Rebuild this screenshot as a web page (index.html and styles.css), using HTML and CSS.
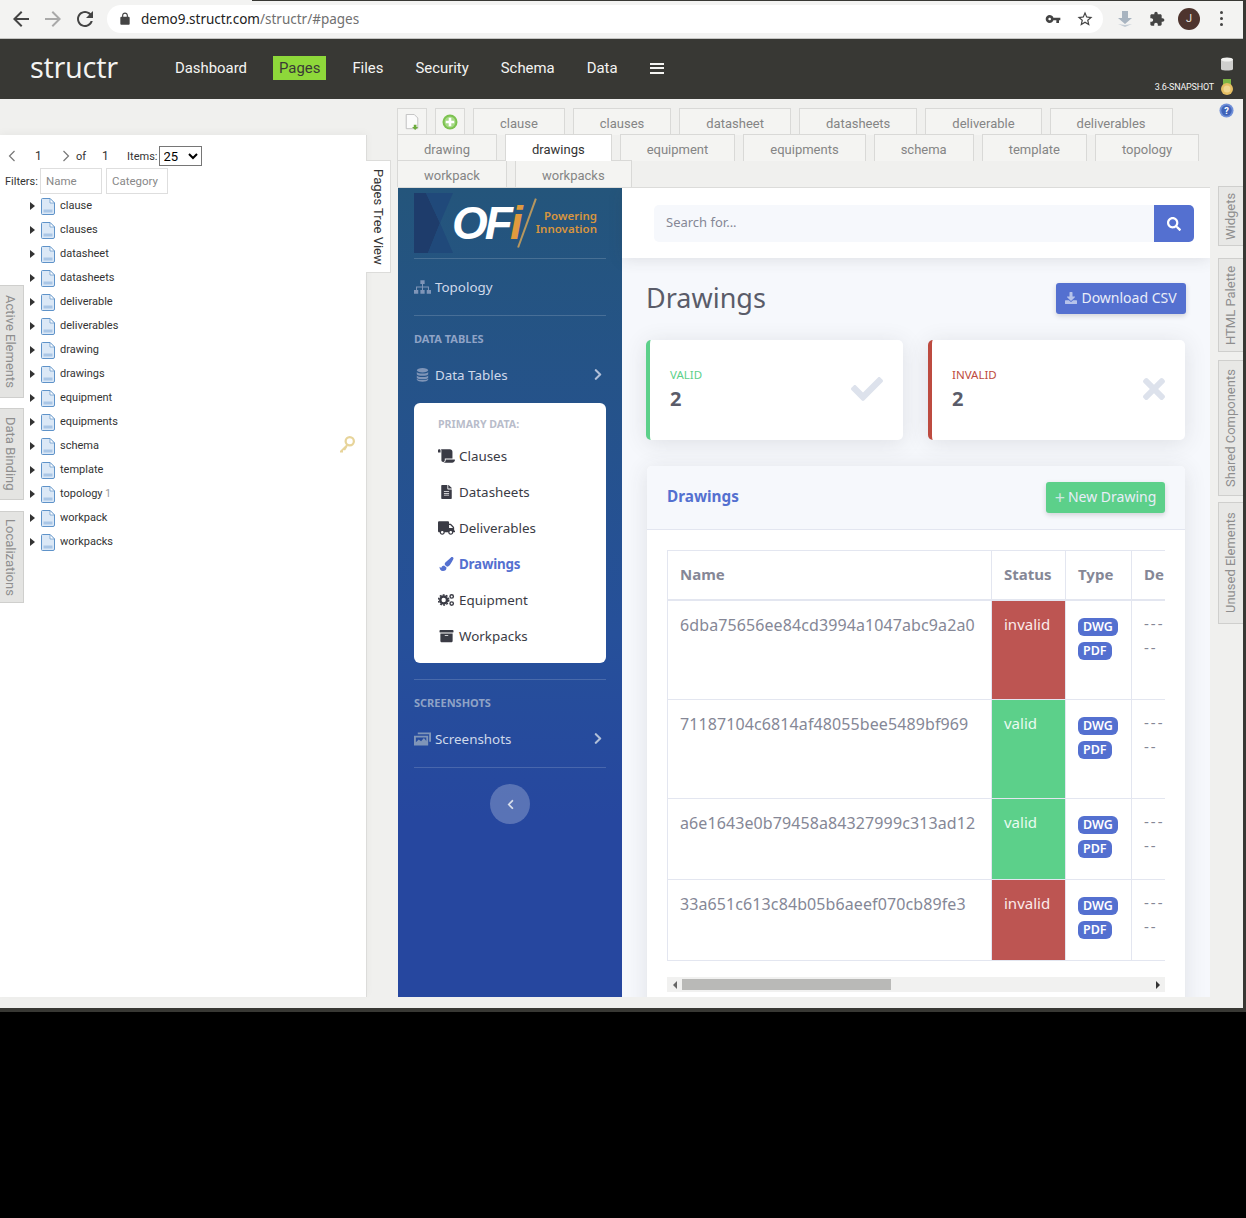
FILE: index.html
```html
<!DOCTYPE html>
<html lang="en">
<head>
    <meta charset="UTF-8">
    <title>Structr - Pages</title>
    <link rel="stylesheet" href="styles.css">
</head>
<body>
<svg class="defs" width="0" height="0">
    <symbol id="i-page" viewBox="0 0 14 17">
        <path d="M1.5.5h7.5l4.5 4.5v10a1.5 1.5 0 0 1-1.5 1.5H1.5A1 1 0 0 1 .5 15.500V1.500a1 1 0 0 1 1-1z" fill="#dbe8f6" stroke="#5f93c9"/>
        <path d="M9 .5V5h4.500z" fill="#fff" stroke="#5f93c9" stroke-width=".7"/>
        <path d="M2.500 11.500h9v3h-9z" fill="#a9c6e6"/>
    </symbol>
    <symbol id="i-chev" viewBox="0 0 320 512"><path d="M285.476 272.971L91.132 467.314c-9.373 9.373-24.569 9.373-33.941 0l-22.667-22.667c-9.357-9.357-9.375-24.522-.04-33.901L188.505 256 34.484 101.255c-9.335-9.379-9.317-24.544.04-33.901l22.667-22.667c9.373-9.373 24.569-9.373 33.941 0L285.475 239.03c9.373 9.372 9.373 24.568.001 33.941z"/></symbol>
    <symbol id="i-download" viewBox="0 0 512 512"><path d="M216 0h80c13.300 0 24 10.700 24 24v168h87.700c17.800 0 26.700 21.500 14.100 34.100L269.700 378.300c-7.500 7.500-19.800 7.500-27.300 0L90.100 226.100c-12.600-12.600-3.700-34.100 14.100-34.100H192V24c0-13.300 10.700-24 24-24zM512 376v112c0 13.300-10.700 24-24 24H24c-13.300 0-24-10.700-24-24V376c0-13.300 10.700-24 24-24h146.700l49 49c20.100 20.100 52.500 20.100 72.600 0l49-49H488c13.300 0 24 10.700 24 24z"/></symbol>
</svg>

<div class="app">
    <div class="browser">
        <svg class="b-icon" viewBox="0 0 24 24" fill="#444"><path d="M20 11H7.830l5.590-5.590L12 4l-8 8 8 8 1.410-1.410L7.830 13H20v-2z"/></svg>
        <svg class="b-icon" viewBox="0 0 24 24" fill="#a9a9a9"><path d="M4 11h12.170l-5.590-5.590L12 4l8 8-8 8-1.410-1.410L16.170 13H4v-2z"/></svg>
        <svg class="b-icon" viewBox="0 0 24 24" fill="#444"><path d="M17.650 6.350C16.200 4.900 14.210 4 12 4c-4.420 0-7.990 3.580-7.990 8s3.570 8 7.990 8c3.730 0 6.840-2.550 7.730-6h-2.080c-.82 2.330-3.040 4-5.650 4-3.310 0-6-2.690-6-6s2.690-6 6-6c1.660 0 3.140.69 4.220 1.780L13 11h7V4l-2.350 2.350z"/></svg>
        <div class="url">
            <svg class="lock" viewBox="0 0 24 24" fill="#444"><path d="M18 8h-1V6c0-2.760-2.240-5-5-5S7 3.240 7 6v2H6c-1.100 0-2 .9-2 2v10c0 1.100.9 2 2 2h12c1.100 0 2-.9 2-2V10c0-1.100-.9-2-2-2zM9 6c0-1.660 1.340-3 3-3s3 1.340 3 3v2H9V6z"/></svg>
            <span class="url-text">demo9.structr.com<span class="url-path">/structr/#pages</span></span>
            <svg class="url-key" viewBox="0 0 24 24" fill="#444"><path d="M12.650 10C11.830 7.670 9.610 6 7 6c-3.310 0-6 2.690-6 6s2.690 6 6 6c2.610 0 4.830-1.670 5.650-4H17v4h4v-4h2v-4H12.650zM7 14c-1.100 0-2-.9-2-2s.9-2 2-2 2 .9 2 2-.9 2-2 2z"/></svg>
            <svg class="url-star" viewBox="0 0 24 24" fill="#444"><path d="M22 9.240l-7.190-.62L12 2 9.190 8.630 2 9.240l5.460 4.730L5.820 21 12 17.270 18.180 21l-1.630-7.030L22 9.240zM12 15.400l-3.760 2.270 1-4.280-3.320-2.880 4.380-.38L12 6.100l1.710 4.040 4.380.38-3.320 2.880 1 4.280L12 15.400z"/></svg>
        </div>
        <div class="b-right">
            <svg class="b-small" viewBox="0 0 16 16"><path d="M5 0h6v7h4l-7 6-7-6h4z" fill="#a8b4c0"/><path d="M1 13l7 3 7-3-7 1z" fill="#c3ccd4"/></svg>
            <svg class="b-small" viewBox="0 0 24 24" fill="#444"><path d="M20.500 11H19V7c0-1.100-.9-2-2-2h-4V3.500C13 2.120 11.880 1 10.500 1S8 2.120 8 3.500V5H4c-1.100 0-1.990.9-1.990 2v3.800H3.500c1.490 0 2.700 1.210 2.700 2.700s-1.210 2.700-2.700 2.700H2V20c0 1.100.9 2 2 2h3.800v-1.500c0-1.490 1.210-2.700 2.700-2.700 1.490 0 2.700 1.210 2.700 2.700V22H17c1.100 0 2-.9 2-2v-4h1.500c1.380 0 2.500-1.120 2.500-2.500S21.880 11 20.500 11z"/></svg>
            <span class="avatar">J</span>
            <span class="dots"><i></i><i></i><i></i></span>
        </div>
    </div>

    <header class="topnav">
        <div class="logo">structr</div>
        <nav class="menu">
            <a>Dashboard</a>
            <a class="on">Pages</a>
            <a>Files</a>
            <a>Security</a>
            <a>Schema</a>
            <a>Data</a>
            <span class="burger"><i></i><i></i><i></i></span>
        </nav>
        <div class="version">
            <svg class="db" viewBox="0 0 12 14"><path d="M0 2.500C0 1 12 1 12 2.500v9.500C12 14 0 14 0 12z" fill="#cfcfcd"/><ellipse cx="6" cy="2.500" rx="6" ry="2" fill="#f1f1ef"/></svg>
            <div class="ver-row">
                <span>3.6-SNAPSHOT</span>
                <svg class="medal" viewBox="0 0 12 16"><path d="M2 0h8v6H2z" fill="#7db544"/><circle cx="6" cy="10" r="6" fill="#e5be63"/><circle cx="6" cy="10" r="3.500" fill="#f0d68f"/></svg>
            </div>
        </div>
    </header>

    <div class="workspace">
        <div class="tree-col">
            <div class="tree-panel">
                <div class="pager">
                    <svg class="pg-arrow first" viewBox="0 0 8 12"><path d="M6.500 1L1.500 6l5 5" fill="none" stroke="#777" stroke-width="1.200"/></svg>
                    <span class="pg-num">1</span>
                    <svg class="pg-arrow" viewBox="0 0 8 12"><path d="M1.500 1l5 5-5 5" fill="none" stroke="#777" stroke-width="1.200"/></svg>
                    <span class="pg-of">of</span>
                    <span class="pg-total">1</span>
                    <span class="pg-items">Items:</span>
                    <select class="pg-select"><option>25</option></select>
                </div>
                <div class="filters">
                    <span>Filters:</span>
                    <input type="text" placeholder="Name">
                    <input type="text" placeholder="Category">
                </div>
                <ul class="tree">
                    <li><svg><use href="#i-page"/></svg>clause</li>
                    <li><svg><use href="#i-page"/></svg>clauses</li>
                    <li><svg><use href="#i-page"/></svg>datasheet</li>
                    <li><svg><use href="#i-page"/></svg>datasheets</li>
                    <li><svg><use href="#i-page"/></svg>deliverable</li>
                    <li><svg><use href="#i-page"/></svg>deliverables</li>
                    <li><svg><use href="#i-page"/></svg>drawing</li>
                    <li><svg><use href="#i-page"/></svg>drawings</li>
                    <li><svg><use href="#i-page"/></svg>equipment</li>
                    <li><svg><use href="#i-page"/></svg>equipments</li>
                    <li><svg><use href="#i-page"/></svg>schema</li>
                    <li><svg><use href="#i-page"/></svg>template</li>
                    <li><svg><use href="#i-page"/></svg>topology&nbsp;<b>1</b></li>
                    <li><svg><use href="#i-page"/></svg>workpack</li>
                    <li><svg><use href="#i-page"/></svg>workpacks</li>
                </ul>
                <svg class="key-hint" viewBox="0 0 24 24"><circle cx="17" cy="7" r="5.500" fill="none" stroke="#e7d49a" stroke-width="3"/><path d="M13 11L4 20v2h4v-3h3l3-5" fill="#e7d49a"/></svg>
            </div>
            <div class="left-tabs">
                <div class="left-tab t-active">Active Elements</div>
                <div class="left-tab t-binding">Data Binding</div>
                <div class="left-tab t-local">Localizations</div>
            </div>
            <div class="tree-tab">Pages Tree View</div>
        </div>

        <div class="center">
            <div class="tabs">
                <div class="tab tab-icon">
                    <svg viewBox="0 0 16 18"><path d="M1.500.5h9l4 4v12h-13z" fill="#fbfbfb" stroke="#bbb"/><path d="M10 12h3v2.500h2L11.500 18 8 14.500h2z" fill="#6cab3c"/></svg>
                </div>
                <div class="tab tab-icon">
                    <svg viewBox="0 0 16 16"><circle cx="8" cy="8" r="7.500" fill="#7cc24f"/><circle cx="8" cy="8" r="5.500" fill="#a6d986"/><path d="M6.700 3.800h2.600v2.900h2.900v2.600H9.300v2.900H6.700V9.300H3.800V6.700h2.900z" fill="#fff"/></svg>
                </div>
                <div class="tab">clause</div>
                <div class="tab">clauses</div>
                <div class="tab">datasheet</div>
                <div class="tab">datasheets</div>
                <div class="tab">deliverable</div>
                <div class="tab">deliverables</div>
                <div class="tab">drawing</div>
                <div class="tab active">drawings</div>
                <div class="tab">equipment</div>
                <div class="tab">equipments</div>
                <div class="tab">schema</div>
                <div class="tab">template</div>
                <div class="tab">topology</div>
                <div class="tab">workpack</div>
                <div class="tab">workpacks</div>
            </div>
            <svg class="help" viewBox="0 0 16 16"><circle cx="8" cy="8" r="7.500" fill="#6f8fd8"/><circle cx="8" cy="8" r="5.500" fill="#3f63b8"/><text x="8" y="11.500" text-anchor="middle" class="help-q">?</text></svg>

            <div class="frame">
                <aside class="sidebar">
                    <div class="brand">
                        <svg class="brand-bg" viewBox="0 0 40 60"><path d="M0 0h12l14 30-12 30H0z" fill="#1e3c6b"/><path d="M12 0h27L26 30l13 30H14l12-30z" fill="#20497a"/></svg>
                        <span class="brand-mark">OF<em>i</em></span>
                        <span class="brand-slash"></span>
                        <span class="brand-tag">Powering<br>Innovation</span>
                    </div>
                    <div class="side-line"></div>
                    <a class="side-link topo">
                        <svg class="side-icon" viewBox="0 0 20 16" fill="currentColor"><path d="M7.500 0h5v4.500h-5zM0 11.500h5V16H0zM7.500 11.500h5V16h-5zM15 11.500h5V16h-5zM9.400 4.500h1.200v2.900h7v4.100h-1.200V8.600h-5.800v2.900H9.400V8.600H3.600v2.900H2.400V7.400h7z"/></svg>
                        Topology
                    </a>
                    <div class="side-line"></div>
                    <div class="side-head">DATA TABLES</div>
                    <a class="side-link">
                        <svg class="side-icon" viewBox="0 0 16 16" fill="currentColor"><ellipse cx="8" cy="2.500" rx="6.500" ry="2.500"/><path d="M1.500 4.500c1 2.400 12 2.400 13 0V7c-1 2.400-12 2.400-13 0zM1.500 8.500c1 2.400 12 2.400 13 0V11c-1 2.400-12 2.400-13 0z"/><path d="M1.500 12c1 2.400 12 2.400 13 0v1.500c-1 3-12 3-13 0z"/></svg>
                        Data Tables
                        <svg class="side-chev"><use href="#i-chev"/></svg>
                    </a>
                    <div class="side-card">
                        <div class="card-head">PRIMARY DATA:</div>
                        <a class="card-link">
                            <svg viewBox="0 0 640 512" fill="currentColor"><path d="M48 0C21.530 0 0 21.530 0 48v64c0 8.840 7.160 16 16 16h80V48C96 21.530 74.470 0 48 0zm208 412.570V352h288V96c0-52.940-43.060-96-96-96H111.590C121.740 13.410 128 29.920 128 48v368c0 38.870 34.660 69.650 74.770 63.120C234.270 474 256 444.460 256 412.570zM288 384v32c0 52.930-43.060 96-96 96h336c61.860 0 112-50.140 112-112 0-8.840-7.160-16-16-16H288z"/></svg>
                            Clauses
                        </a>
                        <a class="card-link">
                            <svg viewBox="0 0 384 512" fill="currentColor"><path d="M224 136V0H24C10.700 0 0 10.700 0 24v464c0 13.300 10.700 24 24 24h336c13.300 0 24-10.700 24-24V160H248c-13.200 0-24-10.800-24-24zm64 236c0 6.600-5.400 12-12 12H108c-6.600 0-12-5.400-12-12v-8c0-6.600 5.400-12 12-12h168c6.600 0 12 5.400 12 12v8zm0-64c0 6.600-5.400 12-12 12H108c-6.600 0-12-5.400-12-12v-8c0-6.600 5.400-12 12-12h168c6.600 0 12 5.400 12 12v8zm0-72v8c0 6.600-5.400 12-12 12H108c-6.600 0-12-5.400-12-12v-8c0-6.600 5.400-12 12-12h168c6.600 0 12 5.400 12 12zm96-114.100v6.100H256V0h6.100c6.400 0 12.500 2.500 17 7l97.900 98c4.500 4.500 7 10.600 7 16.900z"/></svg>
                            Datasheets
                        </a>
                        <a class="card-link">
                            <svg viewBox="0 0 640 512" fill="currentColor"><path d="M624 352h-16V243.900c0-12.700-5.100-24.900-14.100-33.900L494 110.100c-9-9-21.200-14.100-33.900-14.100H416V48c0-26.500-21.500-48-48-48H48C21.500 0 0 21.500 0 48v320c0 26.500 21.500 48 48 48h16c0 53 43 96 96 96s96-43 96-96h128c0 53 43 96 96 96s96-43 96-96h48c8.800 0 16-7.200 16-16v-32c0-8.800-7.200-16-16-16zM160 464c-26.500 0-48-21.500-48-48s21.500-48 48-48 48 21.500 48 48-21.500 48-48 48zm320 0c-26.500 0-48-21.500-48-48s21.500-48 48-48 48 21.500 48 48-21.500 48-48 48zm80-208H416V144h44.100l99.900 99.900V256z"/></svg>
                            Deliverables
                        </a>
                        <a class="card-link current">
                            <svg viewBox="0 0 512 512" fill="currentColor"><path d="M167.020 309.340c-40.120 2.580-76.530 17.860-97.190 72.300-2.350 6.210-8 9.980-14.590 9.980-11.110 0-45.460-27.670-55.250-34.350C0 439.620 37.930 512 128 512c75.860 0 128-43.770 128-120.190 0-3.110-.65-6.080-.97-9.130l-88.010-73.340zM457.890 0c-15.160 0-29.370 6.710-40.210 16.450C213.270 199.050 192 203.340 192 257.090c0 13.700 3.250 26.760 8.730 38.700l63.820 53.180c7.210 1.800 14.640 3.030 22.390 3.030 62.110 0 98.110-45.470 211.160-256.460 7.380-14.350 13.900-29.850 13.900-45.990C512 20.640 486 0 457.890 0z"/></svg>
                            Drawings
                        </a>
                        <a class="card-link">
                            <svg viewBox="0 0 18 14"><circle cx="6" cy="7" r="3.600" fill="none" stroke="currentColor" stroke-width="2.600"/><circle cx="6" cy="7" r="5.400" fill="none" stroke="currentColor" stroke-width="1.600" stroke-dasharray="2 1.400"/><circle cx="14.500" cy="3.200" r="1.800" fill="none" stroke="currentColor" stroke-width="1.500"/><circle cx="14.500" cy="10.800" r="1.800" fill="none" stroke="currentColor" stroke-width="1.500"/></svg>
                            Equipment
                        </a>
                        <a class="card-link">
                            <svg viewBox="0 0 512 512" fill="currentColor"><path d="M32 448c0 17.700 14.300 32 32 32h384c17.700 0 32-14.300 32-32V160H32v288zm160-212c0-6.600 5.400-12 12-12h104c6.600 0 12 5.400 12 12v8c0 6.600-5.400 12-12 12H204c-6.600 0-12-5.400-12-12v-8zM480 32H32C14.300 32 0 46.300 0 64v48c0 8.800 7.200 16 16 16h480c8.800 0 16-7.200 16-16V64c0-17.700-14.300-32-32-32z"/></svg>
                            Workpacks
                        </a>
                    </div>
                    <div class="side-line"></div>
                    <div class="side-head">SCREENSHOTS</div>
                    <a class="side-link">
                        <svg class="side-icon" viewBox="0 0 18 14" fill="currentColor"><path d="M4 0h14v10h-2V2H4z"/><path d="M0 3.500h15V14H0zM2 5.500v5l3-3 2.500 2 3-3.500 2.500 3V5.500z" fill-rule="evenodd"/></svg>
                        Screenshots
                        <svg class="side-chev"><use href="#i-chev"/></svg>
                    </a>
                    <div class="side-line"></div>
                    <div class="side-toggle">
                        <svg viewBox="0 0 320 512"><use href="#i-chev"/></svg>
                    </div>
                </aside>

                <main class="main">
                    <div class="topbar">
                        <div class="search">
                            <span class="search-input">Search for...</span>
                            <span class="search-btn">
                                <svg viewBox="0 0 512 512" fill="#fff"><path d="M505 442.700L405.300 343c-4.500-4.500-10.600-7-17-7H372c27.600-35.300 44-79.700 44-128C416 93.100 322.900 0 208 0S0 93.100 0 208s93.100 208 208 208c48.300 0 92.700-16.400 128-44v16.300c0 6.400 2.500 12.500 7 17l99.700 99.700c9.400 9.400 24.600 9.400 33.900 0l28.300-28.300c9.400-9.400 9.400-24.600.1-34zM208 336c-70.700 0-128-57.200-128-128 0-70.700 57.200-128 128-128 70.700 0 128 57.200 128 128 0 70.700-57.200 128-128 128z"/></svg>
                            </span>
                        </div>
                    </div>
                    <div class="content">
                        <div class="title-row">
                            <h1>Drawings</h1>
                            <a class="btn btn-blue"><svg><use href="#i-download"/></svg>Download CSV</a>
                        </div>
                        <div class="stats">
                            <div class="stat stat-valid">
                                <div>
                                    <div class="stat-label">VALID</div>
                                    <div class="stat-num">2</div>
                                </div>
                                <svg class="stat-icon" viewBox="0 0 512 512"><path d="M173.898 439.404l-166.400-166.400c-9.997-9.997-9.997-26.206 0-36.204l36.203-36.204c9.997-9.998 26.207-9.998 36.204 0L192 312.690 432.095 72.596c9.997-9.997 26.207-9.997 36.204 0l36.203 36.204c9.997 9.997 9.997 26.206 0 36.204l-294.400 294.401c-9.998 9.997-26.207 9.997-36.204-.001z"/></svg>
                            </div>
                            <div class="stat stat-invalid">
                                <div>
                                    <div class="stat-label">INVALID</div>
                                    <div class="stat-num">2</div>
                                </div>
                                <svg class="stat-icon stat-x" viewBox="0 0 352 512"><path d="M242.720 256l100.070-100.070c12.280-12.280 12.280-32.190 0-44.480l-22.240-22.240c-12.280-12.280-32.190-12.280-44.480 0L176 189.280 75.930 89.210c-12.280-12.280-32.190-12.280-44.480 0L9.210 111.450c-12.280 12.280-12.280 32.190 0 44.480L109.280 256 9.210 356.070c-12.280 12.280-12.280 32.190 0 44.480l22.240 22.240c12.280 12.280 32.200 12.280 44.480 0L176 322.720l100.070 100.070c12.280 12.280 32.200 12.280 44.480 0l22.240-22.240c12.280-12.280 12.280-32.190 0-44.480L242.720 256z"/></svg>
                            </div>
                        </div>
                        <section class="card">
                            <div class="card-top">
                                <h2>Drawings</h2>
                                <a class="btn btn-green"><span class="plus">+</span>New Drawing</a>
                            </div>
                            <div class="card-body">
                                <div class="table-wrap">
                                    <table>
                                        <thead>
                                            <tr><th class="c-name">Name</th><th class="c-status">Status</th><th class="c-type">Type</th><th class="c-desc">De</th></tr>
                                        </thead>
                                        <tbody>
                                            <tr class="tall">
                                                <td class="hash">6dba75656ee84cd3994a1047abc9a2a0</td>
                                                <td class="bad">invalid</td>
                                                <td><span class="tag">DWG</span><span class="tag">PDF</span></td>
                                                <td class="dash">---<br>--</td>
                                            </tr>
                                            <tr class="tall">
                                                <td class="hash">71187104c6814af48055bee5489bf969</td>
                                                <td class="good">valid</td>
                                                <td><span class="tag">DWG</span><span class="tag">PDF</span></td>
                                                <td class="dash">---<br>--</td>
                                            </tr>
                                            <tr class="short">
                                                <td class="hash">a6e1643e0b79458a84327999c313ad12</td>
                                                <td class="good">valid</td>
                                                <td><span class="tag">DWG</span><span class="tag">PDF</span></td>
                                                <td class="dash">---<br>--</td>
                                            </tr>
                                            <tr class="short">
                                                <td class="hash">33a651c613c84b05b6aeef070cb89fe3</td>
                                                <td class="bad">invalid</td>
                                                <td><span class="tag">DWG</span><span class="tag">PDF</span></td>
                                                <td class="dash">---<br>--</td>
                                            </tr>
                                        </tbody>
                                    </table>
                                </div>
                                <div class="hscroll">
                                    <span class="sc-left"></span>
                                    <div class="sc-track"><div class="sc-thumb"></div></div>
                                    <span class="sc-right"></span>
                                </div>
                            </div>
                        </section>
                    </div>
                </main>
            </div>
        </div>

        <div class="right-tabs">
            <div class="right-tab t-widgets">Widgets</div>
            <div class="right-tab t-palette">HTML Palette</div>
            <div class="right-tab t-shared">Shared Components</div>
            <div class="right-tab t-unused">Unused Elements</div>
        </div>
    </div>
</div>
</body>
</html>
```

FILE: styles.css
```css
* {
    box-sizing: border-box;
}
html, body {
    margin: 0;
    background: #000;
}
body {
    font-family: Roboto, sans-serif;
    width: 1246px;
    height: 1218px;
    overflow: hidden;
}
a {
    text-decoration: none;
}
.defs {
    position: absolute;
}
.app {
    width: 1246px;
    height: 1012px;
    display: flex;
    flex-direction: column;
    background: #f0f0ee;
    border-right: 3px solid #383834;
    border-bottom: 4px solid #383834;
}

/* browser chrome */
.browser {
    height: 39px;
    flex: none;
    display: flex;
    align-items: center;
    padding: 0 13px 1px 9px;
    background: linear-gradient(#383834, #383834) 252px 0 / 100% 1px no-repeat, #f3f3f2;
    border-bottom: 1px solid #c4c4c2;
}
.b-icon {
    width: 24px;
    height: 24px;
    margin-right: 8px;
}
.url {
    width: 996px;
    height: 28px;
    margin-left: 2px;
    display: flex;
    align-items: center;
    padding: 0 9px 0 11px;
    background: #fff;
    border-radius: 14px;
}
.lock {
    width: 14px;
    height: 14px;
}
.url-text {
    margin-left: 9px;
    font-family: "Noto Sans", sans-serif;
    font-size: 13.500px;
    color: #222;
}
.url-path {
    color: #707070;
}
.url-key {
    width: 16px;
    height: 16px;
    margin-left: auto;
    margin-right: 15px;
}
.url-star {
    width: 18px;
    height: 18px;
}
.b-right {
    display: flex;
    align-items: center;
    margin-left: 14px;
}
.b-small {
    width: 16px;
    height: 16px;
    margin-right: 16px;
}
.b-small + .b-small {
    margin-right: 13px;
}
.avatar {
    width: 22px;
    height: 22px;
    border-radius: 50%;
    background: #4e342e;
    color: #e8e2df;
    font-size: 11px;
    display: flex;
    align-items: center;
    justify-content: center;
}
.dots {
    margin-left: 19.500px;
    display: flex;
    flex-direction: column;
    gap: 3px;
}
.dots i {
    width: 3px;
    height: 3px;
    border-radius: 50%;
    background: #444;
}

/* structr header */
.topnav {
    height: 60px;
    flex: none;
    display: flex;
    align-items: center;
    background: #383834;
    color: #f4f4f2;
}
.logo {
    width: 169px;
    padding-left: 30px;
    padding-bottom: 6px;
    font-family: "Open Sans", sans-serif;
    font-weight: 400;
    font-size: 29px;
    letter-spacing: -.3px;
}
.menu {
    display: flex;
    align-items: center;
    gap: 20px;
    font-size: 14.900px;
    padding-bottom: 2px;
}
.menu a {
    height: 24px;
    line-height: 24px;
    padding: 0 6px;
    color: #f4f4f2;
}
.menu a.on {
    background: #8ed83a;
    color: #3a3a36;
}
.burger {
    display: flex;
    flex-direction: column;
    gap: 2.500px;
    margin-left: 6px;
}
.burger i {
    width: 14px;
    height: 2px;
    background: #f4f4f2;
}
.version {
    margin-left: auto;
    margin-right: 10px;
    height: 100%;
    display: flex;
    flex-direction: column;
    align-items: flex-end;
    padding-top: 18px;
}
.db {
    width: 12px;
    height: 14px;
}
.ver-row {
    display: flex;
    align-items: center;
    gap: 7px;
    margin-top: 8px;
    font-size: 9px;
    letter-spacing: -.2px;
}
.medal {
    width: 12px;
    height: 16px;
}

/* workspace */
.workspace {
    flex: 1;
    display: flex;
    min-height: 0;
    padding-bottom: 11px;
}
.tree-col {
    position: relative;
    width: 397px;
    padding-top: 36px;
    flex: none;
}
.tree-panel {
    position: relative;
    width: 367px;
    height: 100%;
    padding-top: 11px;
    background: #fff;
    border-right: 1px solid #dcdcda;
    font-size: 11px;
    color: #333;
    box-shadow: 0 -2px 8px rgba(0, 0, 0, .04);
}
.pager {
    display: flex;
    align-items: center;
    height: 20px;
}
.pg-arrow {
    width: 8px;
    height: 12px;
    margin-left: 21px;
}
.pg-arrow.first {
    margin-left: 8px;
}
.pg-num {
    margin-left: 19px;
    width: 6px;
    font-size: 12px;
}
.pg-of {
    margin-left: 6px;
}
.pg-total {
    margin-left: 16px;
    width: 6px;
    font-size: 12px;
}
.pg-items {
    margin-left: 19px;
}
.pg-select {
    margin-left: 1px;
    width: 43px;
    height: 20px;
    font-family: Roboto, sans-serif;
    font-size: 13px;
    padding: 0;
    background: #fff;
}
.filters {
    display: flex;
    align-items: center;
    gap: 4px;
    padding-left: 5px;
    height: 26px;
    margin-top: 2px;
}
.filters span {
    margin-right: -2px;
}
.filters input {
    width: 62px;
    height: 26px;
    padding: 0 5px;
    border: 1px solid #dedede;
    font-family: Roboto, sans-serif;
    font-size: 11.500px;
    outline: none;
}
.filters input::placeholder {
    color: #888;
    opacity: 1;
}
.tree {
    list-style: none;
    margin: 0;
    padding: 0 0 0 30px;
}
.tree li {
    position: relative;
    height: 24px;
    display: flex;
    align-items: center;
    padding-left: 30px;
    padding-bottom: 2px;
}
.tree li::before {
    content: "";
    position: absolute;
    left: 0;
    top: 8px;
    border-left: 5px solid #333;
    border-top: 4.500px solid transparent;
    border-bottom: 4.500px solid transparent;
}
.tree li svg {
    position: absolute;
    left: 11px;
    top: 4px;
    width: 14px;
    height: 17px;
}
.tree li b {
    font-weight: 400;
    color: #999;
    font-size: 10px;
}
.key-hint {
    position: absolute;
    left: 337px;
    top: 301px;
    width: 18px;
    height: 18px;
}
.left-tab {
    position: absolute;
    left: 0;
    width: 24px;
    padding-right: 3px;
    writing-mode: vertical-rl;
    text-align: center;
    font-size: 13px;
    line-height: 20px;
    color: #8e8e8e;
    background: #e4e4e2;
    border: 1px solid #cfcfcd;
    border-left: 0;
}
.t-active {
    top: 186px;
    height: 113px;
}
.t-binding {
    top: 309px;
    height: 92px;
}
.t-local {
    top: 412px;
    height: 92px;
}
.tree-tab {
    position: absolute;
    left: 366px;
    top: 61px;
    width: 25px;
    height: 113px;
    background: #fff;
    writing-mode: vertical-rl;
    text-align: center;
    font-size: 13px;
    line-height: 24px;
    color: #333;
    border: 1px solid #dcdcda;
    border-left: 0;
}

/* center column */
.center {
    position: relative;
    width: 813px;
    flex: none;
    display: flex;
    flex-direction: column;
    padding-top: 9px;
}
.tabs {
    display: flex;
    flex-wrap: wrap;
    align-content: flex-start;
    column-gap: 8px;
    height: 79px;
    flex: none;
}
.tab {
    height: 27px;
    line-height: 29px;
    padding: 0 26px;
    background: #f4f4f2;
    border: 1px solid #d9d9d7;
    border-bottom: 0;
    font-size: 13px;
    color: #858585;
    margin-bottom: -1px;
}
.tab.active {
    background: #fff;
    color: #333;
    position: relative;
}
.tab-icon {
    width: 30px;
    padding: 5px 6px 0;
}
.tab-icon svg {
    display: block;
    width: 16px;
    height: 16px;
}
.help {
    position: absolute;
    left: 822px;
    top: 4px;
    width: 15px;
    height: 15px;
}
.help-q {
    font: 700 10px Roboto, sans-serif;
    fill: #fff;
}
.frame {
    flex: 1;
    min-height: 0;
    margin-left: 1px;
    display: flex;
    overflow: hidden;
    background: #fff;
    border-top: 1px solid #dcdcda;
}

/* sidebar */
.sidebar {
    width: 224px;
    flex: none;
    padding: 0 16px;
    background: linear-gradient(180deg, #24557b 0, #26509a 55%, #26479f 78%);
    font-family: "Noto Sans", sans-serif;
    color: #c9d4e6;
}
.brand {
    position: relative;
    height: 70px;
}
.brand-bg {
    position: absolute;
    left: 0;
    top: 5px;
    width: 40px;
    height: 60px;
}
.brand-mark {
    position: absolute;
    left: 38px;
    top: 5px;
    font-family: "Liberation Sans", sans-serif;
    font-weight: 700;
    font-style: italic;
    font-size: 46px;
    line-height: 60px;
    letter-spacing: -3px;
    color: #fff;
}
.brand-mark em {
    color: #e09a3e;
}
.brand-slash {
    position: absolute;
    left: 112px;
    top: 9px;
    width: 1.500px;
    height: 52px;
    background: #b7975f;
    transform: rotate(20deg);
}
.brand-tag {
    position: absolute;
    left: 121px;
    top: 21px;
    width: 62px;
    text-align: right;
    font-size: 11.500px;
    line-height: 13px;
    font-weight: 600;
    color: #d8953e;
}
.side-line {
    height: 1px;
    background: rgba(255, 255, 255, .16);
}
.side-link {
    height: 56px;
    display: flex;
    align-items: center;
    font-size: 13.400px;
    color: #cfd9ea;
}
.side-icon {
    width: 17px;
    height: 14px;
    margin-right: 4px;
    color: #7f95b8;
}
.side-chev {
    width: 8px;
    height: 13px;
    margin-left: auto;
    margin-right: 4px;
    fill: #b2c0d8;
}
.side-head {
    font-size: 11px;
    font-weight: 700;
    color: #8fa3c6;
    padding-top: 17px;
    height: 32px;
    line-height: 12px;
}
.side-card {
    height: 260px;
    margin: 0 0 16px;
    padding: 15px 24px 0;
    background: #fff;
    border-radius: 6px;
}
.side-head + .side-link {
    height: 55px;
    padding-bottom: 2px;
}
.card-head {
    font-size: 10.600px;
    font-weight: 700;
    line-height: 12px;
    color: #b8bcca;
    margin-bottom: 8px;
}
.card-link {
    height: 36px;
    display: flex;
    align-items: center;
    font-size: 13.400px;
    color: #3a3b45;
}
.card-link svg {
    width: 17px;
    height: 14px;
    margin-right: 4px;
    flex: none;
}
.card-link.current {
    color: #5470d0;
    font-weight: 700;
    letter-spacing: -.2px;
}
.side-toggle {
    width: 40px;
    height: 40px;
    margin: 16px auto 0;
    border-radius: 50%;
    background: rgba(255, 255, 255, .24);
    display: flex;
    align-items: center;
    justify-content: center;
}
.side-toggle svg {
    width: 7px;
    height: 11px;
    fill: #d8deea;
    transform: rotate(180deg);
}

/* main area */
.main {
    flex: 1;
    min-width: 0;
    background: #f6f8fc;
    font-family: "Noto Sans", sans-serif;
}
.topbar {
    height: 70px;
    padding: 17px 16px 0 32px;
    background: #fff;
    box-shadow: 0 2px 14px rgba(58, 59, 69, .12);
    position: relative;
}
.search {
    display: flex;
    height: 37px;
}
.search-input {
    flex: 1;
    padding-left: 12px;
    line-height: 35px;
    font-size: 13px;
    color: #858796;
    background: #f6f8fc;
    border-radius: 5px 0 0 5px;
}
.search-btn {
    width: 40px;
    background: #5470d0;
    border-radius: 0 5px 5px 0;
    display: flex;
    align-items: center;
    justify-content: center;
}
.search-btn svg {
    width: 14px;
    height: 14px;
}
.content {
    padding: 25px 24px 0;
}
.title-row {
    display: flex;
    justify-content: space-between;
    align-items: center;
    height: 31px;
}
h1 {
    margin: 0;
    padding-bottom: 3px;
    font-size: 27px;
    font-weight: 400;
    color: #5a5c69;
}
.btn {
    display: flex;
    align-items: center;
    height: 31px;
    padding-bottom: 2px;
    border-radius: 3px;
    font-size: 14px;
    color: #e9edf8;
    box-shadow: 0 2px 5px rgba(58, 59, 69, .2);
}
.btn-blue {
    width: 130px;
    justify-content: center;
    background: #5470d0;
}
.btn-blue svg {
    width: 12px;
    height: 12px;
    margin-right: 4px;
    fill: #b6c3ea;
}
.btn-green {
    width: 119px;
    justify-content: center;
    background: #5cd08a;
}
.plus {
    font-size: 18px;
    line-height: 1;
    margin-right: 3px;
    opacity: .8;
}
.stats {
    display: flex;
    gap: 25px;
    margin-top: 26px;
    width: 539px;
}
.stat {
    flex: 1;
    height: 100px;
    display: flex;
    align-items: center;
    justify-content: space-between;
    padding: 0 20px;
    background: #fff;
    border-radius: 5px;
    border-left: 4px solid;
    box-shadow: 0 3px 22px rgba(58, 59, 69, .13);
}
.stat-valid {
    border-left-color: #5cd08a;
}
.stat-invalid {
    border-left-color: #bd4b40;
}
.stat-label {
    font-size: 11.500px;
    line-height: 14px;
    margin-top: -1px;
}
.stat-valid .stat-label {
    color: #5cd08a;
}
.stat-invalid .stat-label {
    color: #bd4b40;
}
.stat-num {
    margin-top: 4px;
    font-size: 20px;
    line-height: 26px;
    font-weight: 700;
    color: #5a5c69;
}
.stat-icon {
    width: 32px;
    height: 32px;
    fill: #dde2ec;
    margin-top: -2px;
}
.stat-x {
    width: 22px;
    height: 32px;
}
.card {
    margin: 26px 0 0 1px;
    width: 538px;
    height: 700px;
    background: #fff;
    border-radius: 5px 5px 0 0;
    box-shadow: 0 3px 22px rgba(58, 59, 69, .12);
}
.card-top {
    height: 64px;
    display: flex;
    align-items: center;
    justify-content: space-between;
    padding: 0 20px;
    background: #f6f8fc;
    border-bottom: 1px solid #e3e6f0;
    border-radius: 5px 5px 0 0;
}
h2 {
    margin: 0;
    padding-bottom: 3px;
    font-size: 15.300px;
    font-weight: 700;
    color: #5470d0;
}
.card-body {
    padding: 20px;
}
.table-wrap {
    overflow: hidden;
    height: 411px;
}
table {
    border-collapse: collapse;
    table-layout: fixed;
    width: 660px;
    font-size: 15px;
    color: #858796;
}
th, td {
    padding: 13px 12px 12px;
    border: 1px solid #e3e6f0;
    text-align: left;
    vertical-align: top;
    font-weight: 400;
}
th {
    height: 49px;
    padding: 0 12px 2px;
    vertical-align: middle;
    font-weight: 700;
    border-bottom-width: 2px;
}
.c-name {
    width: 324px;
}
.c-status {
    width: 74px;
}
.c-type {
    width: 66px;
}
.c-desc {
    white-space: nowrap;
}
tr.tall {
    height: 99px;
}
tr.tall:first-child {
    height: 100px;
}
tr.short {
    height: 81px;
}
td.hash {
    padding-top: 14px;
    font-size: 16px;
    letter-spacing: .1px;
    line-height: 21px;
}
td.bad {
    background: #bd5552;
    color: #fbeceb;
}
td.good {
    background: #5cd08a;
    color: #e9fbf1;
}
.tag {
    display: block;
    width: fit-content;
    height: 18px;
    margin: 4px 0 6px;
    padding: 0 5px;
    border-radius: 6px;
    background: #5470d0;
    color: #fff;
    font-size: 12.500px;
    line-height: 18px;
    font-weight: 600;
}
td.dash {
    padding-top: 10px;
    line-height: 24px;
    letter-spacing: 2px;
}
.hscroll {
    display: flex;
    align-items: center;
    height: 15px;
    margin-top: 16px;
    background: #f1f1f0;
}
.sc-left, .sc-right {
    width: 15px;
    display: flex;
    justify-content: center;
}
.sc-left::before {
    content: "";
    border-right: 4px solid #666;
    border-top: 4px solid transparent;
    border-bottom: 4px solid transparent;
}
.sc-right::before {
    content: "";
    border-left: 4px solid #333;
    border-top: 4px solid transparent;
    border-bottom: 4px solid transparent;
}
.sc-track {
    flex: 1;
    height: 100%;
    padding: 2px 0;
}
.sc-thumb {
    width: 209px;
    height: 11px;
    background: #b9b9b7;
}

/* right slide-out tabs */
.right-tabs {
    position: relative;
    flex: 1;
}
.right-tab {
    position: absolute;
    left: 8px;
    width: 25px;
    writing-mode: vertical-rl;
    transform: rotate(180deg);
    text-align: center;
    font-size: 13px;
    line-height: 23px;
    color: #8e8e8e;
    background: #e8e8e6;
    border: 1px solid #cfcfcd;
    border-left: 0;
}
.t-widgets {
    top: 87px;
    height: 60px;
}
.t-palette {
    top: 159px;
    height: 94px;
}
.t-shared {
    top: 261px;
    height: 136px;
}
.t-unused {
    top: 403px;
    height: 122px;
}
```
